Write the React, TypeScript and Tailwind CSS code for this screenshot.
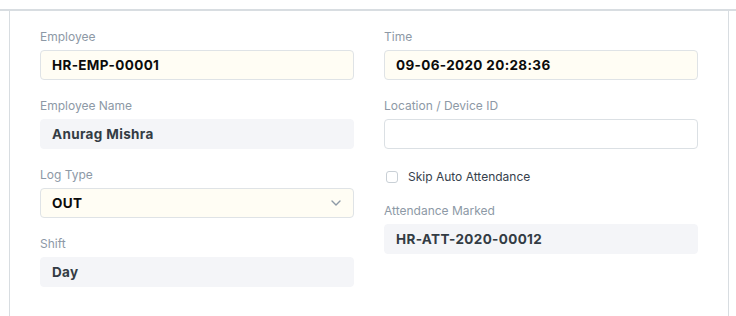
import React from "react";

const font = { fontFamily: "Inter, 'Noto Sans', 'Liberation Sans', sans-serif" };

function Label({ children }: { children: React.ReactNode }) {
  return <div className="text-[12px] leading-[18px] text-[#8d99a6] mb-[4px]">{children}</div>;
}

function Field({
  label,
  value,
  kind,
  select,
}: {
  label: string;
  value?: string;
  kind: "mandatory" | "readonly" | "empty";
  select?: boolean;
}) {
  const box =
    kind === "mandatory"
      ? "bg-[#fffdf4] border border-[#dfe3e6] text-[#0b0b0b]"
      : kind === "readonly"
      ? "bg-[#f4f5f8] border border-[#f4f5f8] text-[#333c44]"
      : "bg-white border border-[#dbe0e4]";
  return (
    <div className="mb-[17px]">
      <Label>{label}</Label>
      <div className={`h-[30px] rounded-[4px] flex items-center justify-between pl-[11px] pr-[12px] ${box}`}>
        <span className="text-[13.5px] font-bold tracking-[0.35px]">{value}</span>
        {select && (
          <svg width="10" height="6" viewBox="0 0 10 6" fill="none">
            <path d="M1 1l4 4 4-4" stroke="#8d99a6" strokeWidth="1.4" strokeLinecap="round" strokeLinejoin="round" />
          </svg>
        )}
      </div>
    </div>
  );
}

export default function App() {
  return (
    <div className="w-[736px] h-[316px] bg-white pt-[9px] overflow-hidden" style={font}>
      <div className="border-t-2 border-[#d8dde1] h-full">
        <div className="ml-[9px] w-[720px] h-full border-l border-r border-[#d8dde1] px-[30px] pt-[17px]">
          <div className="grid grid-cols-2 gap-x-[30px]">
            <div>
              <Field label="Employee" value="HR-EMP-00001" kind="mandatory" />
              <Field label="Employee Name" value="Anurag Mishra" kind="readonly" />
              <Field label="Log Type" value="OUT" kind="mandatory" select />
              <Field label="Shift" value="Day" kind="readonly" />
            </div>
            <div>
              <Field label="Time" value="09-06-2020 20:28:36" kind="mandatory" />
              <Field label="Location / Device ID" kind="empty" />
              <div className="h-[36px] flex items-start pt-[2px]">
                <div className="flex items-center">
                  <div className="w-[12px] h-[12px] ml-[2px] rounded-[3px] border border-[#c9d0d6] bg-white" />
                  <span className="ml-[10px] text-[12px] leading-[18px] text-[#36414c]">Skip Auto Attendance</span>
                </div>
              </div>
              <Field label="Attendance Marked" value="HR-ATT-2020-00012" kind="readonly" />
            </div>
          </div>
        </div>
      </div>
    </div>
  );
}
